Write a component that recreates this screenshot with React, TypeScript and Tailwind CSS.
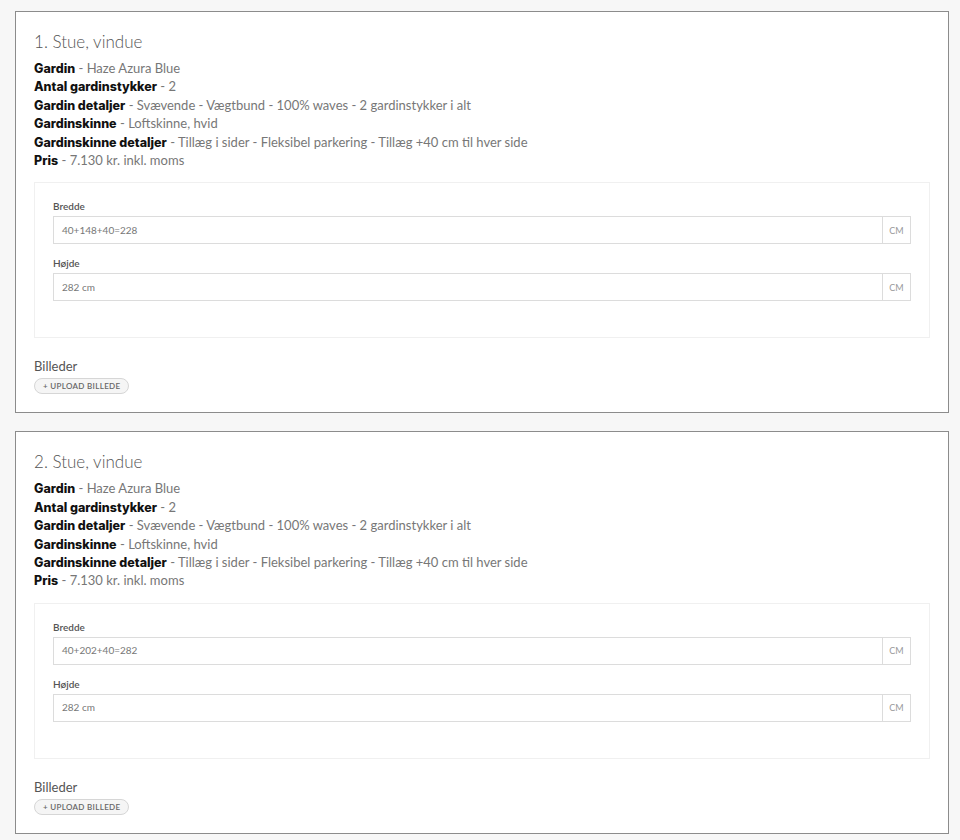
const items = [
  { n: 1, bredde: "40+148+40=228" },
  { n: 2, bredde: "40+202+40=282" },
];

function Field({ label, value }: { label: string; value: string }) {
  return (
    <div className="mb-[12px]">
      <div className="text-[10px] font-semibold text-[#555] leading-[14px] mb-[3px]">{label}</div>
      <div className="flex h-[28px] border border-[#dcdcdc]">
        <div className="flex-1 flex items-center px-[8px] text-[10px] text-[#777]">{value}</div>
        <div className="w-[28px] border-l border-[#dcdcdc] flex items-center justify-center text-[9px] text-[#999]">
          CM
        </div>
      </div>
    </div>
  );
}

function Card({ n, bredde }: { n: number; bredde: string }) {
  const rows: [string, string][] = [
    ["Gardin", "Haze Azura Blue"],
    ["Antal gardinstykker", "2"],
    ["Gardin detaljer", "Svævende - Vægtbund - 100% waves - 2 gardinstykker i alt"],
    ["Gardinskinne", "Loftskinne, hvid"],
    ["Gardinskinne detaljer", "Tillæg i sider - Fleksibel parkering - Tillæg +40 cm til hver side"],
    ["Pris", "7.130 kr. inkl. moms"],
  ];
  return (
    <div className="bg-white border border-[#8c8c8c] px-[18px] pt-[18px] pb-[18px]">
      <h2 className="text-[17px] font-light text-[#555] leading-[24px] mb-[5px]">
        {n}. Stue, vindue
      </h2>
      <div className="text-[13px] leading-[18.4px]">
        {rows.map(([k, v]) => (
          <div key={k} className="h-[18.4px] whitespace-nowrap">
            <span className="font-extrabold text-[#111] text-[12.5px] leading-none font-[Inter,sans-serif]">{k}</span>
            <span className="text-[#777]"> - {v}</span>
          </div>
        ))}
      </div>
      <div className="mt-[13px] border border-[#f0f0f0] px-[18px] pt-[16px] pb-[24px]">
        <Field label="Bredde" value={bredde} />
        <Field label="Højde" value="282 cm" />
      </div>
      <div className="mt-[20px] text-[13px] text-[#555] leading-[16px]">Billeder</div>
      <button className="mt-[4px] flex items-center h-[16px] px-[8px] rounded-full border border-[#d6d6d6] bg-[#f5f5f5] text-[8px] font-semibold tracking-[0.04em] text-[#666] leading-none">
        + UPLOAD BILLEDE
      </button>
    </div>
  );
}

export default function App() {
  return (
    <div
      className="min-h-screen bg-[#f7f7f7] pl-[15px] pr-[11px] pt-[11px] flex flex-col gap-[18px]"
      style={{ fontFamily: "Lato, 'Noto Sans', sans-serif" }}
    >
      {items.map((it) => (
        <Card key={it.n} {...it} />
      ))}
    </div>
  );
}
